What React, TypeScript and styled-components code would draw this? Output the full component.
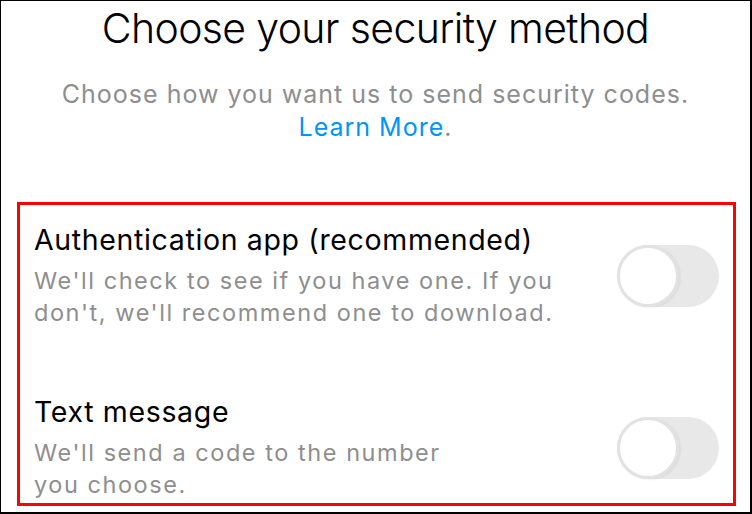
import styled, { createGlobalStyle } from "styled-components"

const GlobalStyle = createGlobalStyle`
  html, body {
    margin: 0;
    padding: 0;
    background: #ffffff;
  }
  body {
    font-family: Inter, "Noto Sans", "Liberation Sans", sans-serif;
    -webkit-font-smoothing: antialiased;
  }
`

const Frame = styled.div`
  width: 752px;
  height: 514px;
  box-sizing: border-box;
  border: 1px solid #000;
  border-right-width: 2px;
  border-bottom-width: 2px;
  overflow: hidden;
  display: flex;
  flex-direction: column;
`

const Header = styled.header`
  text-align: center;
  padding-top: 2px;
`

const Title = styled.h1`
  margin: 0;
  font-size: 41px;
  line-height: 50px;
  font-weight: 300;
  color: #000;
  letter-spacing: -0.65px;
`

const Subtitle = styled.p`
  margin: 25px 0 0;
  font-size: 25px;
  line-height: 33px;
  font-weight: 400;
  color: #8e8e8e;
  letter-spacing: 1px;
`

const Link = styled.a`
  color: #0095f6;
  text-decoration: none;
`

const OptionsBox = styled.section`
  margin: 58px 14px 0 16px;
  border: 3px solid #ff0000;
  padding: 18px 14px 2px 14px;
  display: flex;
  flex-direction: column;
  gap: 66px;
`

const OptionRow = styled.div`
  display: flex;
  align-items: center;
  justify-content: space-between;
`

const OptionText = styled.div`
  display: flex;
  flex-direction: column;
  gap: 8px;
`

const OptionTitle = styled.div`
  font-size: 28.5px;
  line-height: 34px;
  color: #000;
  letter-spacing: 0.65px;
`

const OptionDesc = styled.div`
  font-size: 23.5px;
  line-height: 32px;
  color: #8e8e8e;
  letter-spacing: 1.55px;
`

const Track = styled.div`
  width: 102px;
  height: 62px;
  border-radius: 31px;
  background: #e8e8e8;
  display: flex;
  align-items: center;
  flex-shrink: 0;
`

const Knob = styled.div`
  width: 62px;
  height: 62px;
  box-sizing: border-box;
  border-radius: 50%;
  background: #ffffff;
  border: 3px solid #e2e2e2;
  box-shadow: 2px 1px 2px rgba(0, 0, 0, 0.05);
`

interface Option {
  title: string
  lines: string[]
}

const options: Option[] = [
  {
    title: "Authentication app (recommended)",
    lines: ["We'll check to see if you have one. If you", "don't, we'll recommend one to download."],
  },
  {
    title: "Text message",
    lines: ["We'll send a code to the number", "you choose."],
  },
]

export default function App() {
  return (
    <>
      <GlobalStyle />
      <Frame>
        <Header>
          <Title>Choose your security method</Title>
          <Subtitle>
            Choose how you want us to send security codes.
            <br />
            <Link href="#">Learn More</Link>.
          </Subtitle>
        </Header>
        <OptionsBox>
          {options.map((option) => (
            <OptionRow key={option.title}>
              <OptionText>
                <OptionTitle>{option.title}</OptionTitle>
                <OptionDesc>
                  {option.lines.map((line) => (
                    <div key={line}>{line}</div>
                  ))}
                </OptionDesc>
              </OptionText>
              <Track>
                <Knob />
              </Track>
            </OptionRow>
          ))}
        </OptionsBox>
      </Frame>
    </>
  )
}
